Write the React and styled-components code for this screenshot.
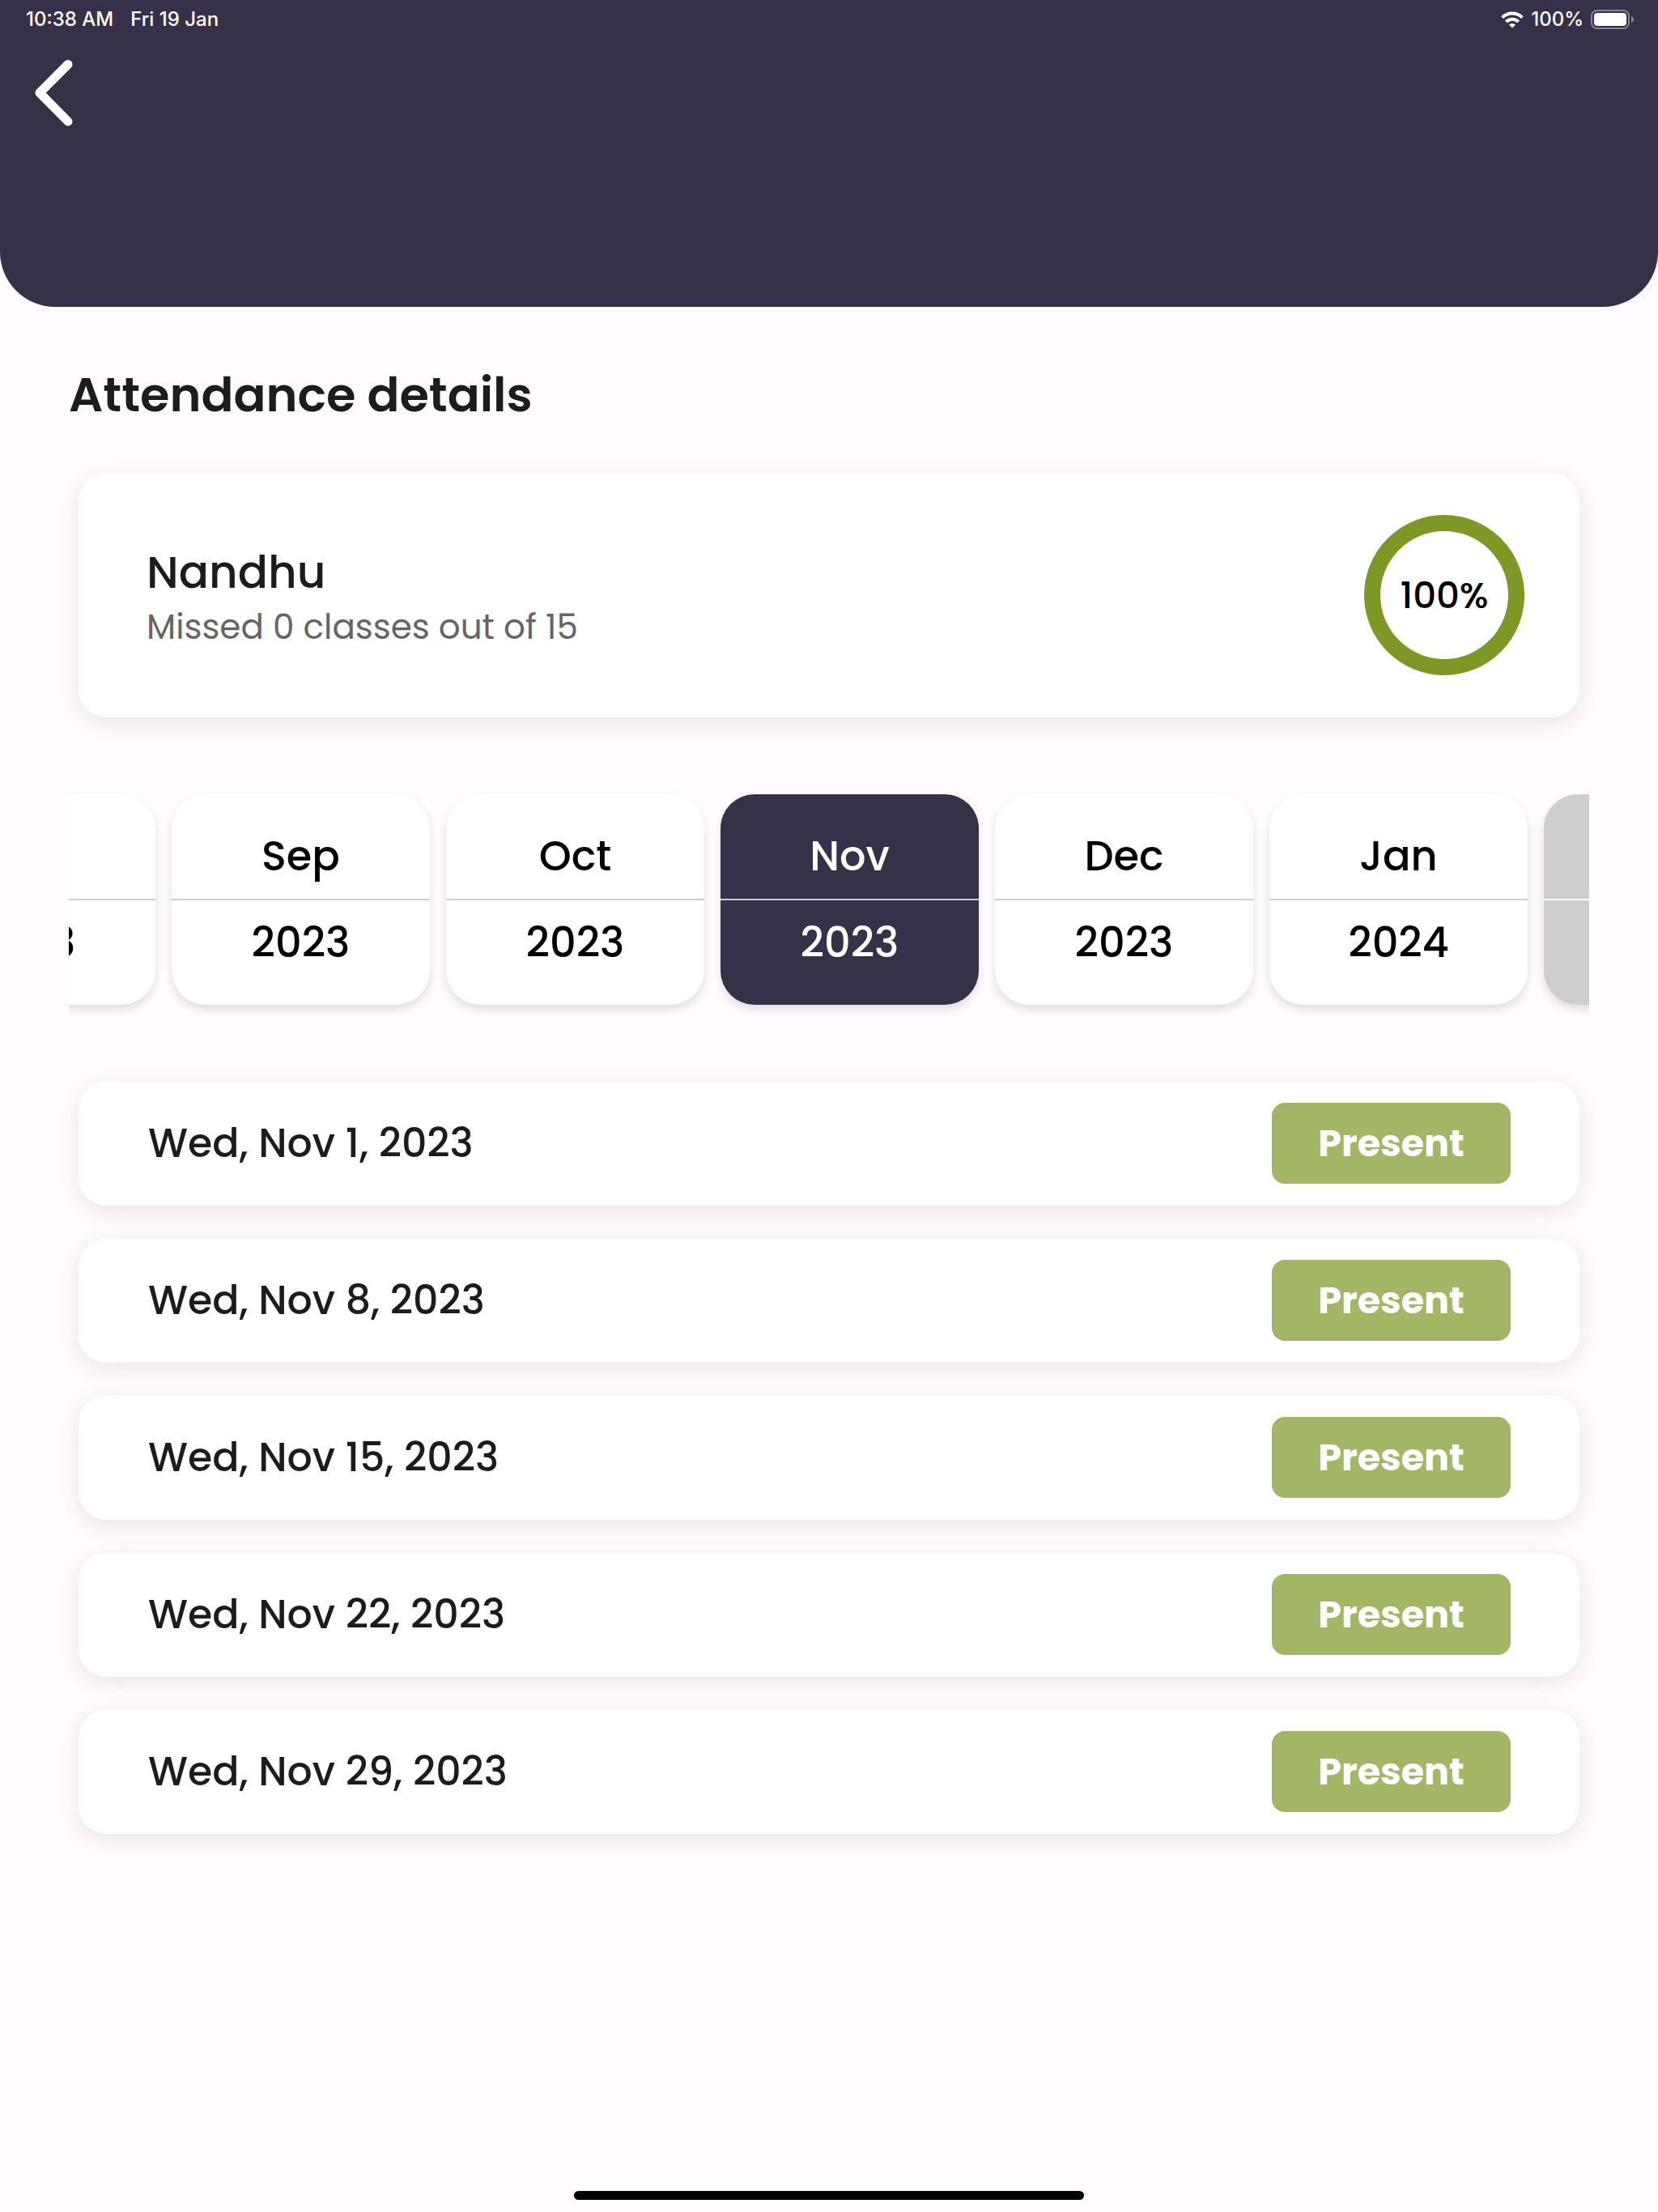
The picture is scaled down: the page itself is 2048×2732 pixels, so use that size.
import React, { useLayoutEffect, useRef, useState } from 'react';
import styled, { createGlobalStyle } from 'styled-components';

const GlobalStyle = createGlobalStyle`
  * {
    box-sizing: border-box;
  }
  body {
    margin: 0;
    background: #fffbff;
    font-family: Poppins, Inter, sans-serif;
  }
`;

const Page = styled.div`
  min-height: 100vh;
  display: flex;
  flex-direction: column;
  color: #1c1b1e;
`;

const Header = styled.header`
  height: 379px;
  border-radius: 0 0 68px 68px;
  background: #363148;
  color: #ffffff;
`;

const StatusBar = styled.div`
  display: flex;
  justify-content: space-between;
  align-items: center;
  height: 48px;
  padding: 0 30px 0 32px;
  font-family: Inter, sans-serif;
  font-size: 24px;
  font-weight: 500;
  line-height: 32px;
`;

const StatusGroup = styled.div`
  display: flex;
  align-items: center;
  gap: ${(props) => props.$gap};
`;

const BackButton = styled.button`
  display: flex;
  margin: 20px 0 0 32px;
  padding: 0;
  border: none;
  background: none;
  color: inherit;
`;

const Content = styled.main`
  display: flex;
  flex-direction: column;
  padding: 73px 85px 0;
`;

const Title = styled.h1`
  margin: 0;
  font-size: 59px;
  font-weight: 600;
  line-height: 72px;
`;

const Card = styled.div`
  display: flex;
  justify-content: space-between;
  align-items: center;
  border-radius: 34px;
  background: #ffffff;
  box-shadow: 0 6px 28px rgba(90, 60, 20, 0.12);
`;

const SummaryCard = styled(Card)`
  margin: 61px 12px 0;
  padding: 51px 68px 52px 84px;
`;

const Person = styled.div`
  padding-top: 12px;
`;

const Name = styled.h2`
  margin: 0;
  font-size: 55px;
  font-weight: 500;
  line-height: 68px;
`;

const Missed = styled.p`
  margin: 0;
  color: #656565;
  font-size: 42px;
  font-weight: 400;
  line-height: 68px;
`;

const Ring = styled.div`
  display: flex;
  justify-content: center;
  align-items: center;
  width: 198px;
  height: 198px;
  padding-top: 2px;
  border: 20px solid #7d9825;
  border-radius: 50%;
  color: #000000;
  font-size: 45px;
  font-weight: 500;
`;

const Months = styled.div`
  display: flex;
  gap: 20px;
  margin-top: 71px;
  padding: 24px 0;
  overflow-x: auto;
  scrollbar-width: none;
`;

const MonthButton = styled.button`
  flex: 0 0 319px;
  padding: 0;
  border: none;
  border-radius: 42px;
  background: ${(props) => (props.$active ? '#363148' : '#ffffff')};
  color: ${(props) => (props.$active ? '#ffffff' : '#000000')};
  box-shadow: 0 6px 12px rgba(0, 0, 0, 0.12);
  font-family: inherit;
  font-size: 51px;
  font-weight: 500;
  line-height: 56px;

  &:disabled {
    background: #cecece;
    color: #ffffff;
  }
`;

const MonthName = styled.span`
  display: block;
  padding: 48px 0 25px;
  border-bottom: 2px solid #cecece;

  ${MonthButton}:disabled & {
    border-color: #ffffff;
  }
`;

const MonthYear = styled.span`
  display: block;
  padding: 24px 0 49px;
`;

const DayList = styled.ul`
  display: flex;
  flex-direction: column;
  gap: 41px;
  margin: 71px 12px 0;
  padding: 0;
  list-style: none;
`;

const DayRow = styled(Card).attrs({ as: 'li' })`
  padding: 26px 85px 27px 86px;
  font-size: 49px;
  font-weight: 500;
  line-height: 56px;
`;

const Badge = styled.span`
  width: 295px;
  padding: 22px 0;
  border-radius: 16px;
  background: #a2b666;
  color: #ffffff;
  font-size: 46px;
  font-weight: 700;
  text-align: center;
`;

const HomeBar = styled.div`
  width: 630px;
  height: 11px;
  margin: auto auto 15px;
  border-radius: 6px;
  background: #000000;
`;

const months = [
  { name: 'Aug', year: 2023 },
  { name: 'Sep', year: 2023 },
  { name: 'Oct', year: 2023 },
  { name: 'Nov', year: 2023 },
  { name: 'Dec', year: 2023 },
  { name: 'Jan', year: 2024 },
  { name: 'Feb', year: 2024, disabled: true },
];

const days = [
  'Wed, Nov 1, 2023',
  'Wed, Nov 8, 2023',
  'Wed, Nov 15, 2023',
  'Wed, Nov 22, 2023',
  'Wed, Nov 29, 2023',
];

const WifiIcon = () => (
  <svg width="28" height="21" viewBox="0 0 28 21" fill="none" stroke="currentColor" strokeWidth="4">
    <path d="M1.6 7.6a17.6 17.6 0 0 1 24.8 0" />
    <path d="M6.4 12.8a10.8 10.8 0 0 1 15.2 0" />
    <path d="M14 20.6l-4-4a5.7 5.7 0 0 1 8 0z" fill="currentColor" stroke="none" />
  </svg>
);

const BatteryIcon = () => (
  <svg width="53" height="24" viewBox="0 0 53 24" fill="none">
    <rect x="1" y="1" width="46" height="22" rx="6.5" stroke="#86839a" strokeWidth="2" />
    <rect x="4" y="4" width="40" height="16" rx="4" fill="#ffffff" />
    <path d="M50 8c2 .7 3 2.2 3 4s-1 3.3-3 4z" fill="#86839a" />
  </svg>
);

const BackIcon = () => (
  <svg width="64" height="94" viewBox="0 0 64 94" fill="none" stroke="currentColor" strokeWidth="11" strokeLinecap="round" strokeLinejoin="round">
    <path d="M52 11.5 17 46.7 52 82" />
  </svg>
);

const MonthPicker = () => {
  const [selected, setSelected] = useState('Nov');
  const listRef = useRef(null);

  // keep the selected month near the middle of the strip
  useLayoutEffect(() => {
    const list = listRef.current;
    const active = list.querySelector('[aria-pressed="true"]');
    const start = active.offsetLeft - list.offsetLeft;
    list.scrollLeft = start - (list.clientWidth - active.offsetWidth) / 2 - 26;
  }, [selected]);

  return (
    <Months ref={listRef}>
      {months.map((month) => (
        <MonthButton
          key={month.name}
          type="button"
          disabled={month.disabled}
          $active={month.name === selected}
          aria-pressed={month.name === selected}
          onClick={() => setSelected(month.name)}
        >
          <MonthName>{month.name}</MonthName>
          <MonthYear>{month.year}</MonthYear>
        </MonthButton>
      ))}
    </Months>
  );
};

const App = () => {
  return (
    <>
      <GlobalStyle />
      <Page>
        <Header>
          <StatusBar>
            <StatusGroup $gap="21px">
              <span>10:38 AM</span>
              <span>Fri 19 Jan</span>
            </StatusGroup>
            <StatusGroup $gap="9px">
              <WifiIcon />
              <span>100%</span>
              <BatteryIcon />
            </StatusGroup>
          </StatusBar>
          <BackButton type="button" aria-label="Back">
            <BackIcon />
          </BackButton>
        </Header>
        <Content>
          <Title>Attendance details</Title>
          <SummaryCard>
            <Person>
              <Name>Nandhu</Name>
              <Missed>Missed 0 classes out of 15</Missed>
            </Person>
            <Ring>100%</Ring>
          </SummaryCard>
          <MonthPicker />
          <DayList>
            {days.map((day) => (
              <DayRow key={day}>
                <span>{day}</span>
                <Badge>Present</Badge>
              </DayRow>
            ))}
          </DayList>
        </Content>
        <HomeBar />
      </Page>
    </>
  );
};

export default App;
